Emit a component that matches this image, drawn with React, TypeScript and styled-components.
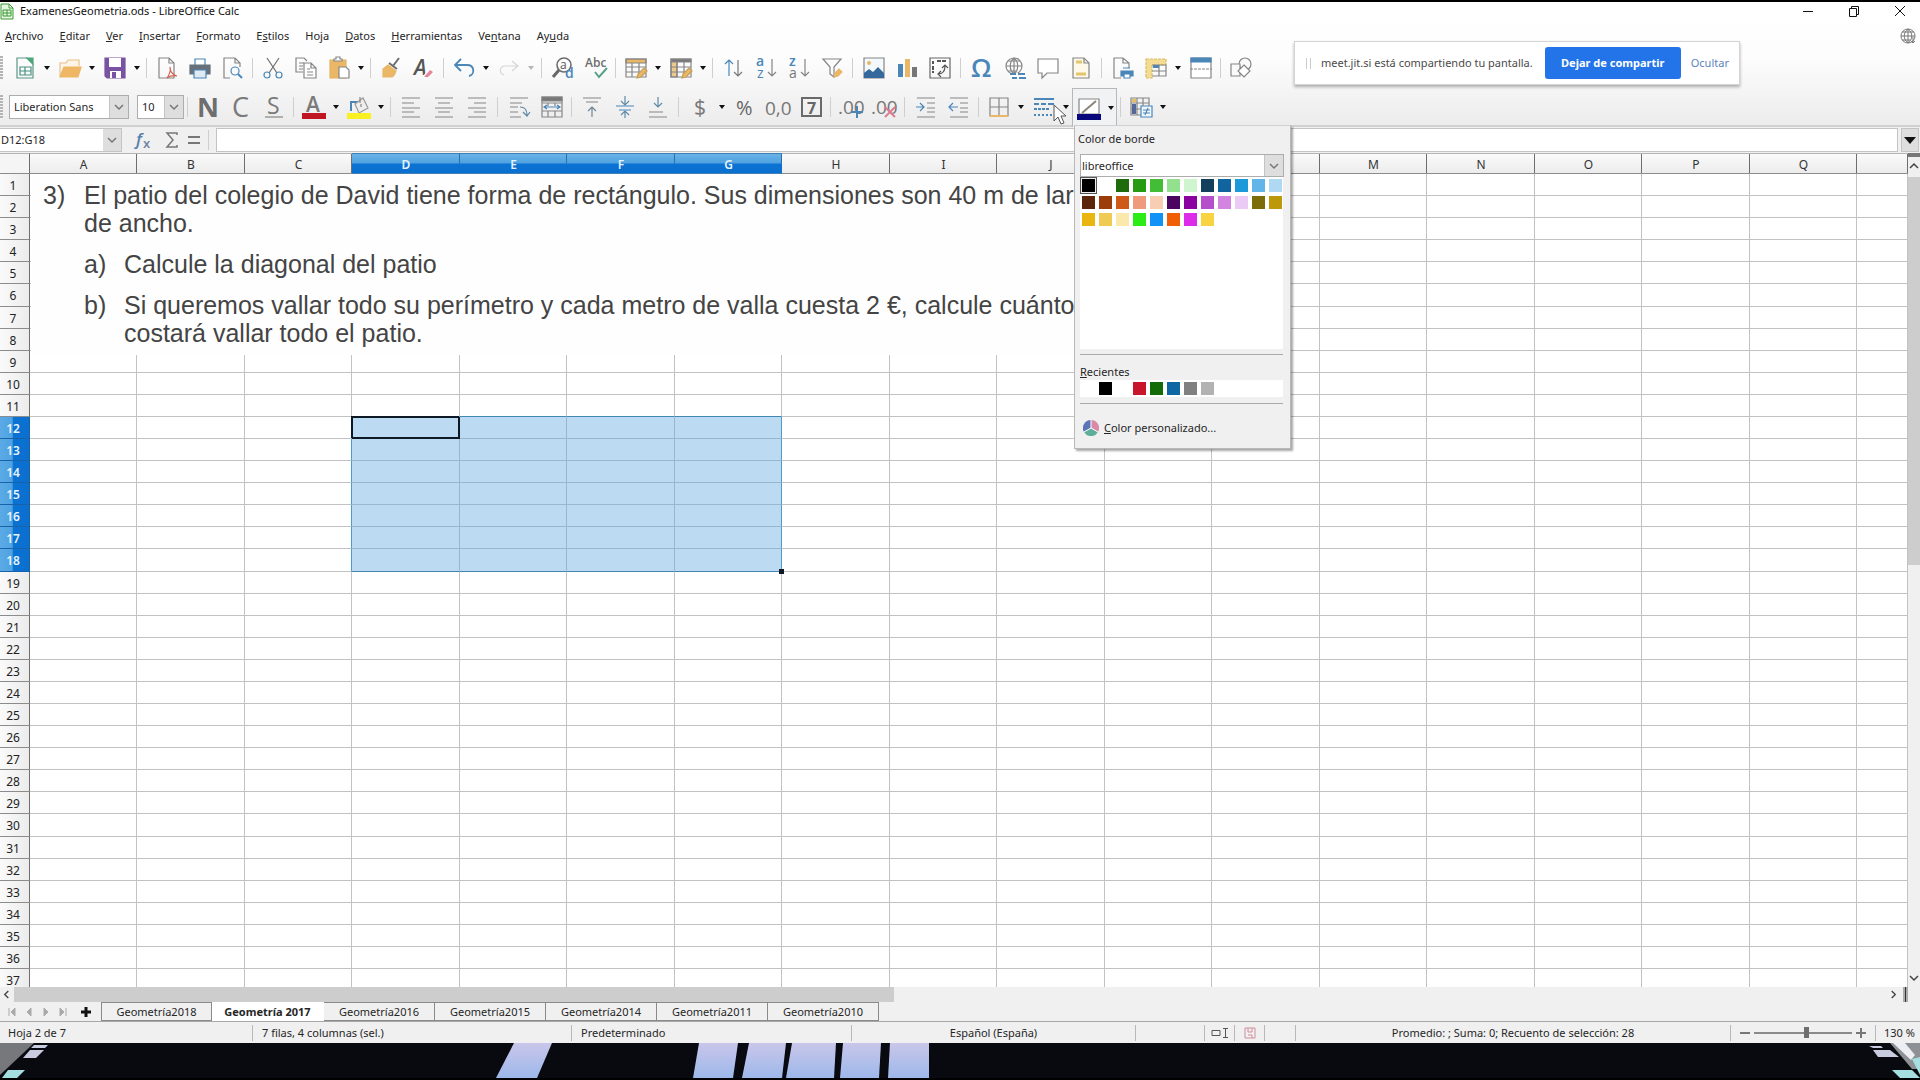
import React from "react";
import styled, { createGlobalStyle, css } from "styled-components";

const UI = '"Noto Sans", "Open Sans", sans-serif';
const DOC = '"Liberation Sans", Arial, sans-serif';

const Global = createGlobalStyle`
  * { box-sizing: border-box; }
  body { margin: 0; background: #000; overflow: hidden; }
  button, input, select { font: inherit; color: inherit; margin: 0; padding: 0; border: 0; background: none; border-radius: 0; outline: 0; }
`;

/* ---------- window frame ---------- */

const Window = styled.div`
  position: relative;
  display: flex;
  flex-direction: column;
  height: 100vh;
  padding: 2px 0;
  background: #000;
  color: #262626;
  font: 11px/16px ${UI};
`;

const Chrome = styled.header`
  display: flex;
  flex-direction: column;
  background: linear-gradient(#ffffff 0, #fdfdfd 45%, #ececec 100%);
  border-bottom: 2px solid #d0d0d0;
`;

const TitleBar = styled.div`
  display: flex;
  align-items: center;
  height: 18px;
  padding-right: 13px;
  color: #111;
`;

const Title = styled.h1`
  flex: 1;
  margin: 0 0 0 6px;
  font: inherit;
`;

const WindowButtons = styled.div`
  display: flex;
  gap: 32px;
`;

const PlainButton = styled.button`
  display: flex;
  align-items: center;
  justify-content: center;
`;

const MenuBar = styled.nav`
  display: flex;
  align-items: center;
  gap: 16px;
  height: 32px;
  padding: 0 4px 0 5px;
`;

const MenuSpacer = styled.span`
  flex: 1;
`;

const Toolbar = styled.div<{ $tall?: boolean }>`
  display: flex;
  align-items: center;
  height: ${(p) => (p.$tall ? 37 : 32)}px;
  margin-top: ${(p) => (p.$tall ? 4 : 0)}px;
`;

const Grip = styled.span<{ $space: number }>`
  width: 3px;
  height: 24px;
  margin-right: ${(p) => p.$space}px;
  background: repeating-linear-gradient(#b4b4b4 0 2px, #f4f4f4 2px 3px);
`;

const ToolButton = styled.button`
  display: flex;
  align-items: center;
  justify-content: center;
  width: 33px;
  height: 28px;
`;

const DropButton = styled.button<{ $dim?: boolean }>`
  display: flex;
  align-items: center;
  justify-content: center;
  width: 12px;
  height: 28px;
  &::after {
    content: "";
    border: 3px solid transparent;
    border-top: 4px solid ${(p) => (p.$dim ? "#b5b5b5" : "#111")};
    border-bottom: 0;
  }
`;

const ActiveTool = styled.span`
  display: flex;
  align-items: center;
  align-self: stretch;
  margin: 0 0 -2px 0;
  background: #f0f2f4;
  box-shadow: inset 0 1px #b8b8b8, inset 1px 0 #b8b8b8, inset -1px 0 #b8b8b8;
`;

const Divider = styled.span<{ $wide?: boolean }>`
  width: 1px;
  height: 20px;
  margin: 0 ${(p) => (p.$wide ? 4 : 3)}px;
  background: #cfcfcf;
`;

const ComboBox = styled.label<{ $width: number; $tall?: boolean }>`
  display: grid;
  width: ${(p) => p.$width}px;
  height: ${(p) => (p.$tall ? 24 : 23)}px;
  border: 1px solid #adadad;
  background: #fff;
  & > * { grid-area: 1 / 1; }
`;

const ComboSelect = styled.select<{ $pad: number }>`
  appearance: none;
  width: 100%;
  padding-left: ${(p) => p.$pad}px;
`;

const ComboArrow = styled.span`
  display: flex;
  align-items: center;
  justify-content: center;
  justify-self: end;
  width: 19px;
  background: #dedede;
  border-left: 1px solid #c4c4c4;
  pointer-events: none;
`;

const ComboGap = styled.span`
  width: 8px;
`;

/* ---------- formula bar ---------- */

const FormulaRow = styled.div`
  display: flex;
  align-items: center;
  height: 26px;
  background: #f0f0f0;
`;

const NameBox = styled.div`
  display: flex;
  width: 122px;
  height: 24px;
  background: #fff;
  border: 1px solid #c4c4c4;
  border-left: 0;
`;

const NameInput = styled.input`
  flex: 1;
  min-width: 0;
  padding-left: 1px;
`;

const BoxArrow = styled(PlainButton)`
  width: 18px;
  background: #dedede;
`;

const FormulaTools = styled.div`
  display: flex;
  align-items: center;
  justify-content: space-around;
  width: 76px;
  margin-left: 7px;
`;

const FormulaInput = styled.input`
  flex: 1;
  height: 24px;
  margin-left: 4px;
  padding: 0 4px;
  background: #fff;
  border: 1px solid #c4c4c4;
`;

const ExpandButton = styled(PlainButton)`
  width: 18px;
  height: 24px;
  margin: 0 1px 0 3px;
  background: #dedede;
  border: 1px solid #c4c4c4;
`;

/* ---------- sheet ---------- */

const Work = styled.main`
  display: flex;
  flex: 1;
  min-height: 0;
  background: #f0f0f0;
`;

const SheetArea = styled.div`
  position: relative;
  flex: 1;
  min-width: 0;
  overflow: hidden;
  background: #fff;
`;

const Grid = styled.table`
  width: 100%;
  table-layout: fixed;
  border-collapse: separate;
  border-spacing: 0;
`;

const Corner = styled.td`
  height: 21px;
  padding: 0;
  background: #f5f5f5;
  border-right: 1px solid #6e6e6e;
  border-bottom: 1px solid #8c8c8c;
  border-top: 1px solid #b4b4b4;
`;

const ColHead = styled.th<{ $on: boolean }>`
  height: 21px;
  padding: 2px 0 0;
  border-top: 1px solid #b4b4b4;
  border-bottom: 1px solid #8c8c8c;
  font-size: 12px;
  font-weight: 400;
  color: #333;
  background:
    linear-gradient(#6e6e6e, #6e6e6e) right / 1px 100% no-repeat,
    linear-gradient(#fafafa, #ececec);
  ${(p) =>
    p.$on &&
    css`
      font-weight: 600;
      color: #e6f4ff;
      border-color: #3e7fb5;
      background:
        linear-gradient(#2c6ea8, #2c6ea8) right top / 1px 50% no-repeat,
        linear-gradient(#69b2e8 0, #4fa2e0 48%, #0b72d4 52%, #0b6fce 100%);
    `}
`;

const RowHead = styled.th<{ $on: boolean; $h: number }>`
  height: ${(p) => p.$h}px;
  padding: 2px 3px 0 0;
  border-right: 1px solid #6e6e6e;
  border-bottom: 1px solid #8c8c8c;
  font-size: 12px;
  font-weight: 400;
  line-height: 16px;
  color: #222;
  background: linear-gradient(90deg, #fafafa, #ececec);
  ${(p) =>
    p.$on &&
    css`
      font-weight: 600;
      color: #e6f4ff;
      border-color: #1763a8;
      background: linear-gradient(90deg, #5aaae6 0, #4fa2e0 42%, #0b72d4 46%, #0b6fce 100%);
    `}
`;

const Cell = styled.td<{ $sel: boolean; $edgeR: boolean; $edgeB: boolean; $cursor: boolean }>`
  padding: 0;
  border-right: 1px solid ${(p) => (p.$edgeR ? "#4d9cc9" : p.$sel ? "#95b8d0" : "#c2c2c2")};
  border-bottom: 1px solid ${(p) => (p.$edgeB ? "#3f88b4" : p.$sel ? "#95b8d0" : "#c2c2c2")};
  background: ${(p) => (p.$sel ? "#bcdaf1" : "#fff")};
  ${(p) =>
    p.$cursor &&
    css`
      position: relative;
      border-color: #0d1a26;
      box-shadow: -1px -1px 0 0 #0d1a26, inset 1px 1px #0d1a26, inset -1px -1px #0d1a26;
    `}
`;

const FillHandle = styled.span`
  position: absolute;
  right: -3px;
  bottom: -3px;
  width: 5px;
  height: 5px;
  background: #0d1a26;
`;

const HandleCell = styled(Cell)`
  position: relative;
`;

const Picture = styled.section`
  position: absolute;
  left: 31px;
  top: 21px;
  width: 1100px;
  height: 181px;
  padding: 7px 0 0 12px;
  background: #fefefe;
  color: #444;
  font: 25px/28px ${DOC};
  white-space: nowrap;
`;

const Item = styled.div<{ $mark: number; $gap?: boolean }>`
  display: grid;
  grid-template-columns: ${(p) => p.$mark}px 1fr;
  margin-top: ${(p) => (p.$gap ? 13 : 0)}px;
`;

const ItemBody = styled.div``;

const Line = styled.p`
  margin: 0;
`;

const VScroll = styled.div`
  display: flex;
  flex-direction: column;
  align-items: flex-end;
  width: 12px;
  overflow: hidden;
`;

const SplitKnob = styled.span`
  width: 12px;
  height: 4px;
  background: #777;
`;

const ScrollArrow = styled(PlainButton)`
  width: 12px;
  height: 18px;
`;

const VTrack = styled.div`
  flex: 1;
  width: 12px;
  margin-top: 2px;
`;

const VThumb = styled.div`
  height: 49%;
  background: #cdcdcd;
`;

const HScroll = styled.div`
  display: flex;
  align-items: center;
  height: 15px;
  background: #f0f0f0;
`;

const HTrack = styled.div`
  flex: 1;
  align-self: stretch;
  margin-left: 2px;
`;

const HThumb = styled.div`
  width: 47%;
  height: 100%;
  background: #cdcdcd;
`;

const HKnob = styled.span`
  width: 5px;
  height: 15px;
  margin: 0 12px 0 4px;
  background: linear-gradient(90deg, #aaa 0 2px, #333 2px 3px, #aaa 3px);
`;

/* ---------- tabs and status ---------- */

const TabRow = styled.div`
  display: flex;
  align-items: center;
  height: 20px;
  background: #f0f0f0;
  border-bottom: 1px solid #a8a8a8;
`;

const TabNav = styled.div`
  display: flex;
  align-items: center;
  gap: 5px;
  width: 101px;
  padding-left: 6px;
`;

const TabButton = styled.button<{ $on?: boolean }>`
  width: ${(p) => (p.$on ? 112 : 111)}px;
  height: 19px;
  padding-top: 1px;
  border: 1px solid ${(p) => (p.$on ? "#fff" : "#8a8a8a")};
  border-left-width: 0;
  background: ${(p) => (p.$on ? "#fff" : "#f0f0f0")};
  font-weight: ${(p) => (p.$on ? 700 : 400)};
  line-height: 16px;
  &:first-of-type { border-left-width: 1px; }
`;

const Tabs = styled.div`
  display: flex;
`;

const StatusBar = styled.footer`
  display: grid;
  grid-template-columns: 253px 319px 280px 284px 69px 30px 30px 31px 1fr 145px 44px;
  align-items: center;
  height: 21px;
  background: #f0f0f0;
`;

const Status = styled.span<{ $center?: boolean; $pad?: number; $last?: boolean }>`
  display: flex;
  align-items: center;
  justify-content: ${(p) => (p.$center ? "center" : "flex-start")};
  height: 16px;
  padding-left: ${(p) => p.$pad ?? 0}px;
  border-right: ${(p) => (p.$last ? 0 : 1)}px solid #b8b8b8;
  white-space: nowrap;
`;

const Zoom = styled.input`
  appearance: none;
  width: 98px;
  height: 14px;
  margin: 0 4px;
  background: linear-gradient(#8a8a8a, #8a8a8a) center / 100% 2px no-repeat;
  &::-webkit-slider-thumb {
    appearance: none;
    width: 5px;
    height: 11px;
    background: #6e6e6e;
  }
`;

const Wallpaper = styled.svg`
  display: block;
  width: 100%;
  height: 35px;
`;

/* ---------- floating pieces ---------- */

const ShareBar = styled.aside`
  position: absolute;
  left: 1294px;
  top: 41px;
  display: flex;
  align-items: center;
  height: 44px;
  padding: 0 10px 0 11px;
  background: #fff;
  border: 1px solid #d4d4d4;
  box-shadow: 0 2px 3px rgba(0, 0, 0, 0.3);
  color: #4a4a4a;
`;

const ShareGrip = styled.span`
  width: 5px;
  height: 11px;
  margin-right: 10px;
  border: solid #ccc;
  border-width: 0 1px;
`;

const StopButton = styled.button`
  width: 136px;
  height: 32px;
  margin: 0 10px 0 12px;
  border-radius: 3px;
  background: #2374e8;
  color: #fff;
  font-weight: 700;
`;

const HideLink = styled.a`
  color: #5d84bd;
  text-decoration: none;
`;

const ColorMenu = styled.section`
  position: absolute;
  left: 1074px;
  top: 125px;
  display: flex;
  flex-direction: column;
  width: 217px;
  padding: 5px 7px 12px 5px;
  background: #f0f0f0;
  border: 1px solid #b8b8b8;
  border-top-color: #d0d0d0;
  box-shadow: 2px 2px 2px rgba(0, 0, 0, 0.35);
`;

const MenuTitle = styled.h2`
  margin: 0 0 7px -2px;
  font: inherit;
`;

const Swatches = styled.div<{ $tall?: boolean }>`
  display: grid;
  grid-template-columns: repeat(12, 17px);
  grid-auto-rows: 17px;
  height: ${(p) => (p.$tall ? 172 : 17)}px;
  background: #fff;
`;

const Swatch = styled.button<{ $color: string; $on?: boolean }>`
  width: 13px;
  height: 13px;
  margin: 2px;
  background: ${(p) => p.$color};
  ${(p) => p.$on && "box-shadow: 0 0 0 1px #eee, 0 0 0 2px #555;"}
`;

const Rule = styled.hr<{ $space: number }>`
  width: 100%;
  height: 1px;
  margin: ${(p) => p.$space}px 0 0;
  border: 0;
  background: #ababab;
`;

const Recent = styled.h3`
  margin: 9px 0 0;
  font: inherit;
`;

const CustomButton = styled.button`
  display: flex;
  align-items: center;
  gap: 5px;
  margin: 16px 0 0 3px;
`;

const Pointer = styled.svg`
  position: absolute;
  left: 1053px;
  top: 104px;
  width: 14px;
  height: 22px;
`;

/* ---------- icons ---------- */

const Svg = styled.svg`
  width: 24px;
  height: 24px;
  overflow: visible;
  fill: none;
  stroke: #858585;
  stroke-width: 1.2;
  text { stroke: none; font-family: "Open Sans", sans-serif; }
`;

const B = "#4a86b8";
const Y = "#e9b765";

const art: Record<string, React.ReactNode> = {
  new: (<><path d="M4 2h10l6 6v14H4z" stroke="#5c9486" /><path d="M14 2h6v6z" fill="#4fa678" stroke="#4fa678" /><path d="M7 11h11v8H7zM7 15h11M12 11v8" stroke="#4a9080" /></>),
  open: (<><path d="M2 20V7h6l2-3h11v6" stroke="#e8c288" fill="#fdf6e8" /><path d="M2 21l4-10h17l-3 10z" fill="#efb765" stroke="#eeb562" /></>),
  save: (<><path d="M2 2h20v20H4l-2-2z" fill="#7a52a3" stroke="#7a52a3" /><path d="M6 2h12v9H6z" fill="#fff" stroke="none" /><path d="M7 15h11v7H7z" fill="#fff" stroke="none" /><path d="M9 16h4v6H9z" fill="#7a52a3" stroke="none" /></>),
  pdf: (<><path d="M4 2h10l5 5v15H4zM14 2v5h5" /><path d="M12 22c3-4 4-7 3-11c0 5 3 8 7 9c-4-1-7 0-10 2z" stroke="#d65f52" fill="#fff" /></>),
  print: (<><path d="M7 9V3h10v6" fill="#fff" stroke={B} /><path d="M2 9h20v9H2z" fill="#66707a" stroke="#66707a" /><path d="M6 14h12v8H6z" fill="#dfeaf3" stroke={B} /></>),
  preview: (<><path d="M9 22H3V2h11l5 5v4M14 2v5h5" /><circle cx="14" cy="15" r="4" stroke={B} /><path d="M17 18l4 4" stroke={B} strokeWidth="2" /></>),
  cut: (<><path d="M6 2l10 15M18 2L8 17" stroke="#6d6d6d" /><circle cx="6" cy="19" r="3" stroke={B} /><circle cx="18" cy="19" r="3" stroke={B} /></>),
  copy: (<><path d="M9 16H2V2h8l3 3M5 7h5M5 10h4M5 13h4" /><path d="M10 7h7l5 5v10H10zM17 7v5h5M13 13h3M13 16h6M13 19h6" fill="#fff" /></>),
  paste: (<><path d="M3 4h16v18H3z" fill={Y} stroke="#e3b45f" /><path d="M7 5V3h2V1h4v2h2v2z" fill="#fff" /><path d="M12 11h7l3 3v8H12z" fill="#fff" /></>),
  brush: (<><path d="M20 2l-6 8M10 7l8 6" stroke="#6c6c6c" strokeWidth="2" /><path d="M9 9l8 6c-1 3-2 5-4 6L4 21v-8z" fill={Y} stroke={Y} /></>),
  clear: (<><text x="2" y="19" fontSize="21" fontStyle="italic" fontWeight="600" fill="#555">A</text><path d="M11 21l7-8l4 3l-6 6z" fill="#e4879b" stroke="#fff" /></>),
  undo: (<path d="M9 3L3 9l6 6M3 9h12c8 0 8 10 2 11" stroke={B} strokeWidth="1.800" />),
  redo: (<path d="M15 5l6 5l-6 5M21 10H8c-6 0-6 8-1 9" stroke="#d6d6d6" />),
  find: (<><circle cx="13" cy="9" r="7" stroke="#6c6c6c" strokeWidth="1.600" /><path d="M8 14l-6 7" stroke="#666" strokeWidth="3" /><text x="9" y="13" fontSize="12" fill="#555">a</text><text x="14" y="22" fontSize="14" fontWeight="600" fill={B}>d</text></>),
  spell: (<><text x="1" y="11" fontSize="12" fontWeight="600" fill="#6c6c6c">Abc</text><path d="M11 16l4 5l8-9" stroke="#58a08a" strokeWidth="2" /></>),
  rows: (<><path d="M2 3h20v4H2z" fill={Y} /><path d="M2 3h20v18H2zM2 11h20M2 16h20M8 7v14M15 7v14" /><path d="M13 22l1-4l6-6l3 3l-6 6z" fill={Y} stroke="#c59f59" /></>),
  cols: (<><path d="M2 3h20v3H2z" fill="#777" /><path d="M2 6h6v15H2z" fill="#edc98b" /><path d="M2 3h20v18H2zM2 11h20M2 16h20M8 6v15M15 6v15" /><path d="M13 22l1-4l6-6l3 3l-6 6z" fill={Y} stroke="#c59f59" /></>),
  sort: (<><path d="M8 20V4M4 8l4-4l4 4" stroke={B} /><path d="M17 4v16M13 16l4 4l4-4" stroke="#777" /></>),
  az: (<><text x="2" y="10" fontSize="14" fontWeight="600" fill={B}>a</text><text x="3" y="22" fontSize="14" fill={B}>z</text><path d="M18 3v17M14 16l4 4l4-4" /></>),
  za: (<><text x="2" y="10" fontSize="14" fontWeight="600" fill={B}>z</text><text x="2" y="22" fontSize="14" fill="#777">a</text><path d="M18 3v17M14 16l4 4l4-4" /></>),
  filter: (<><path d="M3 3h18l-7 8v10l-4-3v-7z" /><path d="M14 21l1-4l4-4l3 3l-4 4z" fill={Y} stroke={Y} /></>),
  image: (<><path d="M2 2h20v20H2z" fill="#f4f9fc" /><path d="M2 22v-5l5-4l4 3l5-5l6 6v5z" fill="#35699d" stroke="none" /><circle cx="7" cy="7" r="2" fill={Y} stroke="none" /></>),
  chart: (<><path d="M3 8h5v13H3z" fill={B} stroke="none" /><path d="M10 3h5v18h-5z" fill={Y} stroke="none" /><path d="M17 11h5v10h-5z" fill="#777" stroke="none" /></>),
  pivot: (<><path d="M2 2h20v20H2z" stroke="#666" /><path d="M5 5v3M9 5h9M5 10v7" stroke="#555" strokeWidth="2" strokeDasharray="4 1" /><path d="M10 18c5 0 7-3 7-8M14 12l3-3l3 3M13 15l-3 3l3 3" stroke="#555" /></>),
  omega: (<text x="1" y="21" fontSize="26" fontWeight="600" fill={B}>Ω</text>),
  globe: (<><circle cx="11" cy="10" r="8" /><path d="M3 10h16M11 2v16M5 5h12M5 15h8M11 2c-5 4-5 12 0 16M11 2c5 4 5 12 0 16" /><path d="M8 17h7v5H8zM16 17h7v5h-7z" fill="#fff" stroke="none" /><path d="M7 18h6M15 18h7M9 22h5M16 22h7" stroke={B} strokeWidth="2" /></>),
  comment: (<path d="M2 3h20v14H11l-5 5v-5H2z" fill="#fff" />),
  headfoot: (<><path d="M4 2h11l5 5v15H4z" fill="#fdf8ea" /><path d="M15 2v5h5" /><path d="M7 6h6M7 18h10" stroke="#e2c56d" strokeWidth="3" /></>),
  area: (<><path d="M10 22H3V2h9l6 5v5M12 2v5h6" /><path d="M10 15h12v5H10z" fill={B} stroke={B} /><path d="M12 12h7M13 18h6v4h-6z" fill="#fff" stroke={B} /></>),
  freeze: (<><path d="M2 3h20v6H8v13H2z" fill="#f3dc93" stroke="#dcbc62" strokeDasharray="3 1" /><path d="M8 9h14v11H8M8 15h14M15 9v11" /><path d="M9 9h6v3H9z" fill={B} stroke="none" /></>),
  split: (<><path d="M2 2h20v20H2z" fill="#fff" /><path d="M2 2h20v4H2z" fill={B} stroke={B} /><path d="M1 13h22" strokeDasharray="3 1" /></>),
  shapes: (<><circle cx="16" cy="8" r="6" /><path d="M2 8h9v12H2z" fill="#fafafa" /><path d="M15 9l6 6l-6 6l-6-6z" fill="#fff" /></>),
  bold: (<text x="1" y="22" fontSize="27" fontWeight="700" fill="#6e6e6e">N</text>),
  italic: (<text x="3" y="22" fontSize="27" fill="#7a7a7a">C</text>),
  under: (<><text x="5" y="19" fontSize="23" fill="#7a7a7a">S</text><path d="M3 22h18" /></>),
  fontcolor: (<><text x="4" y="17" fontSize="21" fontWeight="600" fill="#7a7a7a">A</text><path d="M0 18h24v6H0z" fill="#c01622" stroke="none" /></>),
  highlight: (<><path d="M4 16V7h7" stroke={B} strokeWidth="2" /><path d="M8 9l8-6l5 10l-9 5z" fill="#eee" stroke="#999" /><path d="M13 8V2M14 9v3" stroke="#888" /><path d="M0 18h24v6H0z" fill="#f8f021" stroke="none" /></>),
  left: (<path d="M3 3h18M3 8h12M3 13h18M3 17h12M3 22h18" />),
  center: (<path d="M3 3h18M6 8h12M3 13h18M6 17h12M3 22h18" />),
  right: (<path d="M3 3h18M9 8h12M3 13h18M9 17h12M3 22h18" />),
  wrap: (<><path d="M3 3h18M3 8h12M3 17h8M3 22h11M3 12h8" /><path d="M13 12c5 0 7 3 7 8M16 17l4 4l3-4" stroke="#5f8aa8" /></>),
  merge: (<><path d="M2 2h20v20H2zM2 8h20M2 16h20M8 8v3M15 8v3M8 16v6M15 16v6" /><path d="M2 2h20v4H2z" fill="#777" /><path d="M5 12h14M7 10l-3 2l3 2M17 10l3 2l-3 2" stroke={B} /></>),
  top: (<><path d="M3 3h18M6 7h12" /><path d="M12 22V12M8 16l4-4l4 4" stroke="#6f8596" /></>),
  middle: (<><path d="M3 11h18M6 15h12" stroke={B} /><path d="M12 1v8M8 6l4 4l4-4M12 23v-6M8 20l4-4l4 4" stroke="#5f8aa8" /></>),
  bottom: (<><path d="M3 17h14M3 22h18" /><path d="M12 2v10M8 8l4 4l4-4" stroke="#5f8aa8" /></>),
  currency: (<text x="6" y="20" fontSize="21" fill="#777">$</text>),
  percent: (<text x="3" y="20" fontSize="20" fill="#666">%</text>),
  number: (<text x="-1" y="20" fontSize="19" fill="#777">0,0</text>),
  date: (<><path d="M3 3h19v18H3z" strokeWidth="2" stroke="#6a6a6a" /><text x="8" y="19" fontSize="16" fontWeight="700" fill="#666">7</text></>),
  addDec: (<><text x="-1" y="19" fontSize="19" fill="#777">.00</text><path d="M18 11v12M12 17h12" stroke={B} strokeWidth="2" /></>),
  delDec: (<><text x="-1" y="19" fontSize="19" fill="#777">.00</text><path d="M13 12l10 10M23 12L13 22" stroke="#dd7d92" strokeWidth="2" /></>),
  indent: (<><path d="M3 3h18M13 8h8M13 13h8M13 17h8M3 22h18" /><path d="M2 12h8M6 8l4 4l-4 4" stroke={B} /></>),
  outdent: (<><path d="M3 3h18M13 8h8M13 13h8M13 17h8M3 22h18" /><path d="M11 12H2M6 8l-4 4l4 4" stroke={B} /></>),
  borders: (<><path d="M3 3h18v18H3zM12 3v18M3 12h18" /><path d="M3 21h18" stroke={Y} strokeWidth="2" /></>),
  linestyle: (<path d="M2 4h20M2 9h5m2 0h5m2 0h6M2 14h3m1 0h3m1 0h3m1 0h3M2 20h2m2 0h2m2 0h2m2 0h2m2 0h2" stroke={B} strokeWidth="2" />),
  linecolor: (<><path d="M2 3h20v15H2z" fill="#fff" /><path d="M5 17L19 5" stroke="#8c8479" strokeWidth="2" /><path d="M0 18h24v6H0z" fill="#08087c" stroke="none" /></>),
  conditional: (<><path d="M2 3h18v17H2zM2 8h18M2 14h18M8 3v17M14 3v17" /><path d="M3 4h4v3H3z" fill="#e6bd5f" stroke="none" /><path d="M3 9h4v10H3z" fill="#54669a" stroke="none" /><path d="M12 11h11v11H12z" fill="#f1f8fc" stroke={B} /><path d="M14 15h7M14 18h7M19 13l-3 7" stroke={B} /></>),
};

const labels: Record<string, string> = {
  new: "Nuevo", open: "Abrir", save: "Guardar", bold: "Negrita", italic: "Cursiva", under: "Subrayado",
};

function Tool({ name, drop, dim }: { name: string; drop?: boolean; dim?: boolean }) {
  return (
    <>
      <ToolButton aria-label={labels[name] ?? name}>
        <Svg viewBox="0 0 24 24" aria-hidden>{art[name]}</Svg>
      </ToolButton>
      {drop && <DropButton $dim={dim} aria-label={`${labels[name] ?? name} menu`} />}
    </>
  );
}

const Chevron = ({ dir = 0, size = 10, color = "#777" }: { dir?: number; size?: number; color?: string }) => (
  <svg width={size} height={size} viewBox="0 0 10 10" fill="none" stroke={color} strokeWidth="1.500">
    <path d="M1 3l4 4l4-4" transform={`rotate(${dir} 5 5)`} />
  </svg>
);

function Combo({ label, value, width, tall, pad = 4 }: { label: string; value: string; width: number; tall?: boolean; pad?: number }) {
  return (
    <ComboBox $width={width} $tall={tall}>
      <ComboSelect $pad={pad} aria-label={label} defaultValue={value}>
        <option>{value}</option>
      </ComboSelect>
      <ComboArrow><Chevron /></ComboArrow>
    </ComboBox>
  );
}

/* a bar is a list of names: "|" thin divider, "‖" wide divider, trailing "+" adds a drop arrow, "-" a dimmed one */
function Tools({ list }: { list: string }) {
  return (
    <>
      {list.split(" ").map((t, i) => {
        if (t === "|" || t === "‖") return <Divider key={i} $wide={t === "‖"} />;
        const end = t.slice(-1);
        const drop = end === "+" || end === "-";
        return <Tool key={i} name={drop ? t.slice(0, -1) : t} drop={drop} dim={end === "-"} />;
      })}
    </>
  );
}

/* ---------- data ---------- */

const menus: [string, number][] = [
  ["Archivo", 0], ["Editar", 0], ["Ver", 0], ["Insertar", 0], ["Formato", 0], ["Estilos", 1],
  ["Hoja", 2], ["Datos", 0], ["Herramientas", 0], ["Ventana", 2], ["Ayuda", 2],
];
const columns = "ABCDEFGHIJKLMNOPQ".split("");
const rows = Array.from({ length: 37 }, (_, i) => i + 1);
const sheets = ["Geometría2018", "Geometría 2017", "Geometría2016", "Geometría2015", "Geometría2014", "Geometría2011", "Geometría2010"];
const palette = [
  "#000000", "#ffffff", "#1e6a0d", "#249b10", "#43bd35", "#93e08f", "#cff5cf", "#123f5c", "#11659f", "#1c99d8", "#62b5e8", "#afd8f2",
  "#5c260c", "#9c3c0b", "#cf5a18", "#ee9a7b", "#f7cdb4", "#4b0560", "#8a02a0", "#b64fca", "#d184e0", "#eccaf6", "#7c6d0a", "#bc980a",
  "#e8b60e", "#efca54", "#fbe9ab", "#2cec17", "#1093f4", "#f05f06", "#dd2ce9", "#f8d443",
];
const recent = ["#ffffff", "#000000", "#ffffff", "#c9152b", "#136c08", "#0e67a3", "#808080", "#b2b2b2"];

const Mnemonic = ({ text, at }: { text: string; at: number }) => (
  <span>{text.slice(0, at)}<u>{text[at]}</u>{text.slice(at + 1)}</span>
);

function Sheet() {
  return (
    <SheetArea>
      <Grid>
        <colgroup>
          <col style={{ width: 30 }} />
          {columns.map((c, i) => <col key={c} style={{ width: 107 + (i % 2) }} />)}
          <col />
        </colgroup>
        <thead>
          <tr>
            <Corner />
            {columns.map((c) => <ColHead key={c} scope="col" $on={c >= "D" && c <= "G"}>{c}</ColHead>)}
            <ColHead $on={false} />
          </tr>
        </thead>
        <tbody>
          {rows.map((r) => {
            const inRows = r >= 12 && r <= 18;
            return (
              <tr key={r}>
                <RowHead scope="row" $on={inRows} $h={r % 12 === 6 ? 23 : 22}>{r}</RowHead>
                {[...columns, "R"].map((c) => {
                  const inCols = c >= "D" && c <= "G";
                  const props = {
                    $sel: inRows && inCols,
                    $edgeR: inRows && (c === "C" || c === "G"),
                    $edgeB: inCols && (r === 11 || r === 18),
                    $cursor: c === "D" && r === 12,
                  };
                  return c === "G" && r === 18
                    ? <HandleCell key={c} {...props}><FillHandle /></HandleCell>
                    : <Cell key={c} {...props} />;
                })}
              </tr>
            );
          })}
        </tbody>
      </Grid>
      <Picture>
        <Item $mark={41}>
          <span>3)</span>
          <ItemBody>
            <Line>El patio del colegio de David tiene forma de rectángulo. Sus dimensiones son 40 m de lar</Line>
            <Line>de ancho.</Line>
            <Item $mark={40} $gap>
              <span>a)</span>
              <Line>Calcule la diagonal del patio</Line>
            </Item>
            <Item $mark={40} $gap>
              <span>b)</span>
              <ItemBody>
                <Line>Si queremos vallar todo su perímetro y cada metro de valla cuesta 2 €, calcule cuánto</Line>
                <Line>costará vallar todo el patio.</Line>
              </ItemBody>
            </Item>
          </ItemBody>
        </Item>
      </Picture>
    </SheetArea>
  );
}

export default function App() {
  return (
    <Window>
      <Global />
      <Chrome>
        <TitleBar>
          <svg width="14" height="17" viewBox="0 0 14 17" fill="#e7f5e2" stroke="#3a9a35">
            <path d="M1 1h8l4 4v11H1zM9 1v4h4M3 7h8v6H3zM3 10h8M7 7v6" />
          </svg>
          <Title>ExamenesGeometria.ods - LibreOffice Calc</Title>
          <WindowButtons>
            <PlainButton aria-label="Minimizar">
              <svg width="14" height="14" viewBox="0 0 14 14" stroke="#111"><path d="M2 7.500h10" /></svg>
            </PlainButton>
            <PlainButton aria-label="Restaurar">
              <svg width="14" height="14" viewBox="0 0 14 14" stroke="#111" fill="none"><path d="M2.500 4.500h7v8h-7zM4.500 4.500v-2h7v8h-2" /></svg>
            </PlainButton>
            <PlainButton aria-label="Cerrar">
              <svg width="14" height="14" viewBox="0 0 14 14" stroke="#111"><path d="M2 2l10 10M12 2L2 12" /></svg>
            </PlainButton>
          </WindowButtons>
        </TitleBar>
        <MenuBar>
          {menus.map(([t, at]) => <PlainButton key={t}><Mnemonic text={t} at={at} /></PlainButton>)}
          <MenuSpacer />
          <PlainButton aria-label="Actualizaciones">
            <svg width="16" height="16" viewBox="0 0 16 16" fill="none" stroke="#777">
              <circle cx="8" cy="8" r="7" /><path d="M1 8h14M8 1v14M2 4h12M2 12h9M8 1c-5 4-5 10 0 14M8 1c5 4 5 10 0 14M13 9v6M11 13l2 2l2-2" />
            </svg>
          </PlainButton>
        </MenuBar>
        <Toolbar>
          <Grip $space={5} />
          <Tools list="new+ open+ save+ | pdf print preview | cut copy paste+ | brush clear | undo+ redo- ‖ find spell | rows+ cols+ | sort az za filter ‖ image chart pivot ‖ omega globe comment headfoot ‖ area freeze+ split | shapes" />
        </Toolbar>
        <Toolbar $tall>
          <Grip $space={6} />
          <Combo label="Nombre de fuente" value="Liberation Sans" width={120} tall />
          <ComboGap />
          <Combo label="Tamaño de fuente" value="10" width={47} tall />
          <Tools list="| bold italic under | fontcolor+ highlight+ | left center right ‖ wrap merge | top middle bottom ‖ currency+ percent number date | addDec delDec ‖ indent outdent | borders+ linestyle+" />
          <ActiveTool><Tool name="linecolor" drop /></ActiveTool>
          <Tools list="| conditional+" />
        </Toolbar>
      </Chrome>

      <FormulaRow>
        <NameBox>
          <NameInput aria-label="Cuadro de nombre" defaultValue="D12:G18" />
          <BoxArrow aria-label="Lista de nombres"><Chevron /></BoxArrow>
        </NameBox>
        <FormulaTools>
          <PlainButton aria-label="Asistente">
            <Svg viewBox="0 0 24 24"><text x="3" y="17" fontSize="17" fontStyle="italic" fontWeight="600" fill="#5580ad">f</text><text x="10" y="20" fontSize="13" fontWeight="600" fill="#6c83a3">x</text></Svg>
          </PlainButton>
          <PlainButton aria-label="Suma">
            <svg width="14" height="18" viewBox="0 0 14 18" fill="none" stroke="#777" strokeWidth="1.500"><path d="M12 4V2H2l6 7l-6 7h10v-2" /></svg>
          </PlainButton>
          <PlainButton aria-label="Fórmula">
            <svg width="14" height="12" viewBox="0 0 14 12" stroke="#777" strokeWidth="2"><path d="M1 3h12M1 9h12" /></svg>
          </PlainButton>
        </FormulaTools>
        <Divider />
        <FormulaInput aria-label="Línea de entrada" />
        <ExpandButton aria-label="Expandir">
          <svg width="12" height="7" viewBox="0 0 12 7"><path d="M0 0h12L6 7z" fill="#111" /></svg>
        </ExpandButton>
      </FormulaRow>

      <Work>
        <Sheet />
        <VScroll>
          <SplitKnob />
          <ScrollArrow aria-label="Arriba"><Chevron dir={180} color="#444" /></ScrollArrow>
          <VTrack><VThumb /></VTrack>
          <ScrollArrow aria-label="Abajo"><Chevron color="#444" /></ScrollArrow>
        </VScroll>
      </Work>

      <HScroll>
        <ScrollArrow aria-label="Izquierda"><Chevron dir={90} size={9} color="#444" /></ScrollArrow>
        <HTrack><HThumb /></HTrack>
        <ScrollArrow aria-label="Derecha"><Chevron dir={270} size={9} color="#444" /></ScrollArrow>
        <HKnob />
      </HScroll>

      <TabRow>
        <TabNav>
          {["M3 2v8M9 2v8L5 6z", "M8 2v8L4 6z", "M4 2v8l4-4z", "M9 2v8M3 2v8l4-4z"].map((d, i) => (
            <PlainButton key={d} aria-label={`Ir a hoja ${i}`}>
              <svg width="12" height="12" viewBox="0 0 12 12" fill="#aaa" stroke="#aaa"><path d={d} /></svg>
            </PlainButton>
          ))}
          <PlainButton aria-label="Añadir hoja">
            <svg width="24" height="12" viewBox="0 0 24 12" stroke="#111" strokeWidth="3"><path d="M12 1v10M7 6h10" /></svg>
          </PlainButton>
        </TabNav>
        <Tabs>
          {sheets.map((s, i) => <TabButton key={s} $on={i === 1}>{s}</TabButton>)}
        </Tabs>
      </TabRow>

      <StatusBar>
        <Status $pad={8}>Hoja 2 de 7</Status>
        <Status $pad={9}>7 filas, 4 columnas (sel.)</Status>
        <Status $pad={9}>Predeterminado</Status>
        <Status $center>Español (España)</Status>
        <Status />
        <Status $center>
          <svg width="18" height="12" viewBox="0 0 18 12" fill="none" stroke="#555"><path d="M1 3.500h8v5H1zM12 1.500h5M12 10.500h5M14.500 1v10" /></svg>
        </Status>
        <Status $center>
          <svg width="12" height="12" viewBox="0 0 12 12" fill="none" stroke="#cf8f9c"><path d="M1 1h10v10H1zM4 1v4h4V1M4 8h4v3" /></svg>
        </Status>
        <Status />
        <Status $center>Promedio: ; Suma: 0; Recuento de selección: 28</Status>
        <Status $center>
          <svg width="10" height="10" viewBox="0 0 10 10" stroke="#777" strokeWidth="2"><path d="M0 5h10" /></svg>
          <Zoom type="range" aria-label="Zoom" min={0} max={100} defaultValue={54} />
          <svg width="10" height="10" viewBox="0 0 10 10" stroke="#777" strokeWidth="2"><path d="M0 5h10M5 0v10" /></svg>
        </Status>
        <Status $pad={8} $last>130 %</Status>
      </StatusBar>

      <Wallpaper viewBox="0 0 1920 35" preserveAspectRatio="none" aria-hidden>
        <defs>
          <linearGradient id="key" x1="0" y1="0" x2="0" y2="1">
            <stop offset="0" stopColor="#c9c6ea" />
            <stop offset="1" stopColor="#9db8ea" />
          </linearGradient>
        </defs>
        <rect width="1920" height="35" fill="#080a10" />
        <path d="M0 0h34L0 32z" fill="#77787c" />
        <path d="M30 7h14l-8 8H23zM34 2h14l-3 3H31z" fill="#c9cbe0" />
        <path d="M8 27h17l-8 8H2z" fill="#a5dfe0" />
        <g fill="url(#key)">
          <path d="M514 0h38l-15 35h-41z" />
          <path d="M699 0h39l-5 35h-40z" />
          <path d="M749 0h37l-4 35h-40z" />
          <path d="M792 0h44l-2 35h-48z" />
          <path d="M843 0h38l-2 35h-39z" />
          <path d="M890 0h39v35h-41z" />
        </g>
        <path d="M1890 0h30v26h-8z" fill="#8d9094" />
        <path d="M1893 0h12l10 12l-4 5z" fill="#eceef4" />
        <path d="M1873 7h17l9 7h-21zM1869 3h12l2 2h-10z" fill="#c9cbe0" />
        <path d="M1892 27h20l8 8h-20zM1912 16l8-2v18z" fill="#a5dfe0" />
      </Wallpaper>

      <ShareBar>
        <ShareGrip />
        <span>meet.jit.si está compartiendo tu pantalla.</span>
        <StopButton>Dejar de compartir</StopButton>
        <HideLink href="#ocultar">Ocultar</HideLink>
      </ShareBar>

      <ColorMenu>
        <MenuTitle>Color de borde</MenuTitle>
        <Combo label="Paleta" value="libreoffice" width={204} pad={1} />
        <Swatches $tall>
          {palette.map((c, i) => <Swatch key={i} $color={c} $on={i === 0} aria-label={c} />)}
        </Swatches>
        <Rule $space={5} />
        <Recent><Mnemonic text="Recientes" at={0} /></Recent>
        <Swatches>
          {recent.map((c, i) => <Swatch key={i} $color={c} aria-label={c} />)}
        </Swatches>
        <Rule $space={6} />
        <CustomButton>
          <svg width="16" height="16" viewBox="0 0 16 16">
            <path d="M8 8V0A8 8 0 0 1 15 12z" fill="#d98aa8" />
            <path d="M8 8l7 4A8 8 0 0 1 1 12z" fill="#5fae9a" />
            <path d="M8 8l-7 4A8 8 0 0 1 8 0z" fill="#5b76b8" />
            <path d="M8 8V0M8 8l7 4M8 8l-7 4" stroke="#fff" />
          </svg>
          <Mnemonic text="Color personalizado..." at={0} />
        </CustomButton>
      </ColorMenu>

      <Pointer viewBox="0 0 14 22" fill="#fff" stroke="#555">
        <path d="M1 1v16l4-4l3 7l3-1l-3-7h5z" />
      </Pointer>
    </Window>
  );
}
